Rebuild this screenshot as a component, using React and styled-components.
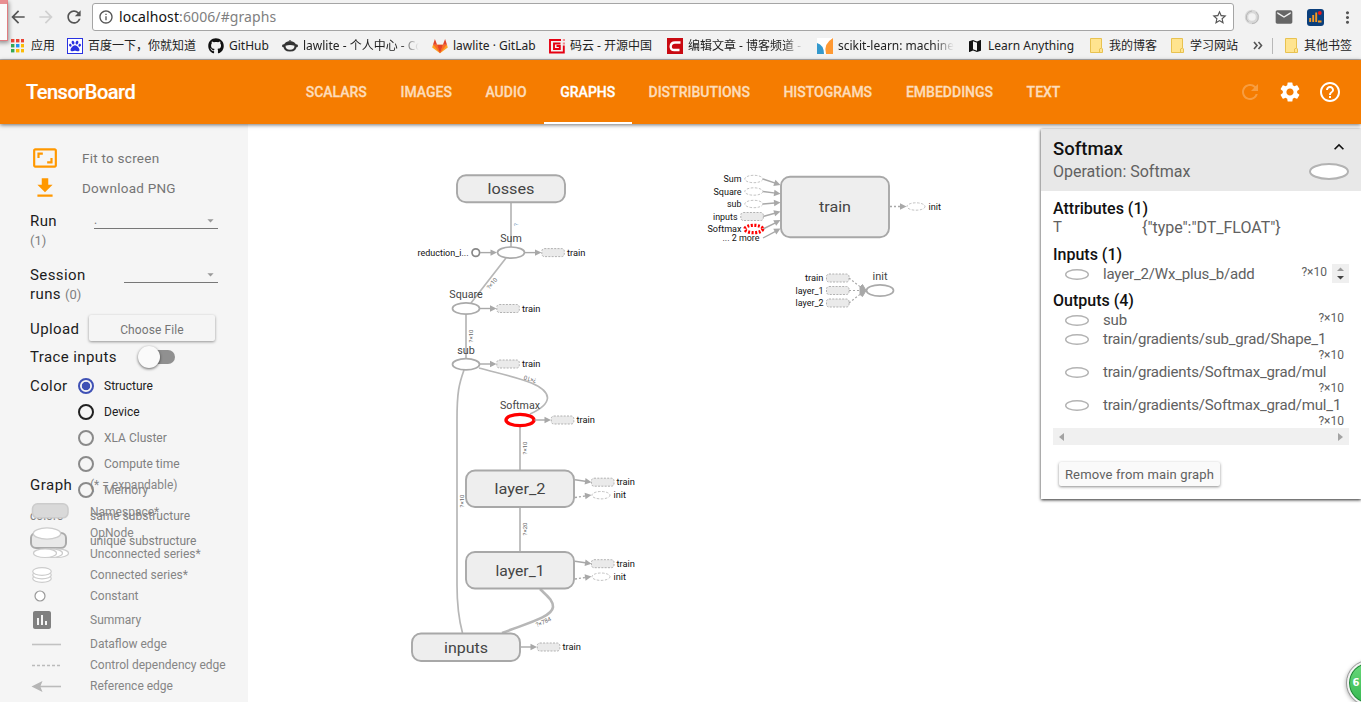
import React from "react";
import styled, { createGlobalStyle } from "styled-components";
import {
  MdRefresh, MdSettings, MdHelpOutline, MdArrowBack, MdArrowForward, MdInfoOutline,
  MdStarBorder, MdMail, MdMoreVert, MdMap, MdAspectRatio, MdGetApp, MdInsertChart,
  MdExpandLess, MdArrowDropDown,
} from "react-icons/md";
import { FaGithub, FaPaw } from "react-icons/fa";

const Global = createGlobalStyle`
  * { box-sizing: border-box; }
  body { margin: 0; overflow: hidden; background: #fff; font-family: Roboto, "Noto Sans CJK SC", sans-serif; }
  svg { display: block; flex: none; }
`;

const Page = styled.div`
  position: relative;
  display: flex;
  flex-direction: column;
  width: 1361px;
  height: 702px;
  overflow: hidden;
`;

/* ---------- browser chrome ---------- */
const Chrome = styled.div`
  height: 60px;
  flex: none;
  background: #f2f2f2;
  border-bottom: 1px solid #b4b2b4;
  color: #555;
`;
const Toolbar = styled.div`
  height: 33px;
  display: flex;
  align-items: center;
  padding: 1px 4px 0 8px;
`;
const NavButtons = styled.div`
  display: flex;
  width: 84px;
  gap: 8px;
`;
const AddressBar = styled.div`
  width: 1142px;
  height: 28px;
  display: flex;
  align-items: center;
  padding: 0 5px;
  background: #fff;
  border: 1px solid #a5a5a5;
  border-radius: 3px;
`;
const Url = styled.div`
  flex: 1;
  padding-left: 5px;
  font: 14px/20px "Noto Sans", sans-serif;
  letter-spacing: 0.1px;
  color: #808080;
  b { font-weight: 400; color: #111; }
`;
const Extensions = styled.div`
  flex: 1;
  display: flex;
  align-items: center;
  justify-content: space-between;
  padding-left: 10px;
`;
const Bookmarks = styled.div`
  height: 25px;
  display: flex;
  align-items: center;
  padding-left: 10px;
`;
const Bookmark = styled.div`
  width: ${(p) => p.$w}px;
  flex: none;
  display: flex;
  align-items: center;
  gap: ${(p) => p.$gap ?? 5}px;
`;
const BookmarkText = styled.span`
  width: ${(p) => (p.$fade ? "117px" : "auto")};
  overflow: hidden;
  white-space: nowrap;
  font: 12px/18px "Noto Sans", "Noto Sans CJK SC", sans-serif;
  color: #222;
  ${(p) => p.$fade && "mask-image: linear-gradient(90deg, #000 82%, transparent 99%);"}
`;
const Divider = styled.div`
  width: 1px;
  height: 16px;
  margin: 0 12px 0 9px;
  background: #b8b8b8;
`;
const WindowCorner = styled.div`
  position: absolute;
  left: -4px;
  top: 0;
  width: 12px;
  height: 41px;
  background: #fbfbfb;
  border: 1px solid #e07c80;
  border-top: 4px solid #e88f92;
  box-shadow: 1px 2px 4px rgba(0, 0, 0, 0.4);
`;

/* ---------- app header ---------- */
const Header = styled.header`
  position: relative;
  z-index: 3;
  height: 64px;
  flex: none;
  display: flex;
  background: #f57c00;
  box-shadow: 0 1px 4px rgba(0, 0, 0, 0.55);
  color: #fff;
`;
const Brand = styled.div`
  width: 288.5px;
  padding-left: 26px;
  font-size: 20px;
  font-weight: 500;
  line-height: 64px;
  letter-spacing: -0.5px;
  -webkit-text-stroke: 0.2px;
`;
const Tabs = styled.nav`
  flex: 1;
  display: flex;
`;
const Tab = styled.div`
  width: ${(p) => p.$w}px;
  text-align: center;
  font-size: 14px;
  font-weight: 500;
  line-height: 65px;
  white-space: nowrap;
  -webkit-text-stroke: 0.3px;
  color: ${(p) => (p.$active ? "#fff" : "#fddcba")};
  box-shadow: ${(p) => (p.$active ? "inset 0 -2px #fff" : "none")};
`;
const HeaderIcons = styled.div`
  display: flex;
  align-items: center;
  gap: 16px;
  padding-right: 19px;
`;

/* ---------- body ---------- */
const Main = styled.main`
  position: relative;
  flex: 1;
  display: flex;
`;
const Sidebar = styled.aside`
  position: relative;
  width: 248px;
  flex: none;
  padding: 19px 30px 0;
  background: #f5f5f5;
`;
const Action = styled.div`
  height: 30px;
  display: flex;
  align-items: center;
  gap: 24px;
  padding-left: 2px;
  font-size: 13.5px;
  line-height: 17px;
  letter-spacing: 0.25px;
  color: #757575;
  svg { color: #ff9800; }
`;
const ActionText = styled.span`
  padding-top: 1px;
`;
const Field = styled.div`
  display: flex;
  justify-content: space-between;
  height: ${(p) => p.$h}px;
  margin-top: ${(p) => p.$mt ?? 0}px;
`;
const FieldName = styled.div`
  font-size: 15px;
  line-height: ${(p) => p.$line ?? 19}px;
  letter-spacing: 0.4px;
  color: #1c1c1c;
  white-space: nowrap;
  small { font-size: 13px; color: #808080; letter-spacing: 0; }
`;
const Select = styled.div`
  width: ${(p) => p.$w}px;
  height: 17px;
  display: flex;
  justify-content: space-between;
  align-items: center;
  border-bottom: 1px solid #777;
  font-size: 12px;
  color: #777;
  svg { color: #999; }
`;
const FileButton = styled.div`
  width: 126px;
  height: 26px;
  margin-right: 3px;
  border-radius: 2px;
  box-shadow: 0 1px 3px rgba(0, 0, 0, 0.4);
  text-align: center;
  font-size: 12px;
  line-height: 31px;
  letter-spacing: 0.1px;
  color: #757575;
`;
const Toggle = styled.div`
  width: 37px;
  height: 22px;
  margin-right: 43px;
  display: flex;
  align-items: center;
  &::before {
    content: "";
    width: 22px;
    height: 22px;
    flex: none;
    border-radius: 50%;
    background: #fafafa;
    box-shadow: 0 1px 3px rgba(0, 0, 0, 0.6);
    z-index: 1;
  }
  &::after {
    content: "";
    width: 26px;
    height: 14px;
    flex: none;
    margin-left: -11px;
    border-radius: 7px;
    background: #909090;
  }
`;
const Radios = styled.div`
  width: 140px;
`;
const Radio = styled.div`
  height: 26px;
  display: flex;
  align-items: center;
  gap: 10px;
  font-size: 12px;
  white-space: nowrap;
  color: ${(p) => (p.$off ? "#808080" : "#212121")};
`;
const Dot = styled.span`
  width: 16px;
  height: 16px;
  border-radius: 50%;
  border: 2px solid ${(p) => (p.$on ? "#3f51b5" : p.$off ? "#8a8a8a" : "#212121")};
  background: ${(p) => (p.$on ? "radial-gradient(circle, #3f51b5 3.8px, transparent 4.6px)" : "none")};
`;
const Swatch = styled.div`
  height: 25px;
  display: flex;
  align-items: center;
  font-size: 12px;
  white-space: nowrap;
  color: #808080;
`;
const SwatchKey = styled.div`
  width: 60px;
`;
const UniqueNode = styled.div`
  width: 37px;
  height: 17px;
  border: 2px solid #aaa;
  border-radius: 6px;
  background: #e9e9e9;
`;
const Legend = styled.div`
  position: absolute;
  left: 30px;
  right: 0;
  bottom: 6px;
`;
const LegendRow = styled.div`
  height: ${(p) => p.$h ?? 21}px;
  margin-bottom: ${(p) => p.$mb ?? 0}px;
  display: flex;
  align-items: center;
  font-size: 12px;
  white-space: nowrap;
  color: #858585;
`;
const LegendKey = styled.div`
  width: 60px;
`;
const LegendTitle = styled(LegendKey)`
  font-size: 15px;
  letter-spacing: 0.5px;
  color: #1c1c1c;
`;

/* ---------- info card ---------- */
const Card = styled.section`
  position: absolute;
  left: 1041px;
  top: 5px;
  width: 320px;
  height: 370px;
  background: #fff;
  box-shadow: 0 1px 3px rgba(0, 0, 0, 0.85);
  color: #616161;
`;
const CardHead = styled.div`
  height: 62px;
  display: flex;
  justify-content: space-between;
  padding: 8px 12px 0;
  background: #e8e8e8;
`;
const CardTitle = styled.div`
  font-size: 18.5px;
  line-height: 24px;
  font-weight: 500;
  color: #111;
`;
const CardSub = styled.div`
  font-size: 16px;
  line-height: 21px;
`;
const CardHeadSide = styled.div`
  display: flex;
  flex-direction: column;
  align-items: flex-end;
  gap: 5.5px;
  svg:first-child { color: #111; }
`;
const CardBody = styled.div`
  padding: 8px 12px 0;
`;
const SectionTitle = styled.div`
  height: 19px;
  font-size: 16px;
  line-height: 19px;
  font-weight: 500;
  color: #111;
`;
const AttrRow = styled.div`
  height: 27px;
  display: flex;
  font-size: 16px;
  line-height: 20px;
  letter-spacing: -0.03px;
  span:first-child { width: 89px; font-size: 15px; line-height: 18px; }
`;
const OpRow = styled.div`
  height: ${(p) => p.$h}px;
  display: flex;
  flex-wrap: wrap;
  align-content: flex-start;
  align-items: flex-start;
  padding-left: 12px;
  font-size: 15px;
  line-height: 20px;
  & > svg { margin-top: 4.5px; }
`;
const OpName = styled.span`
  margin-left: 14px;
  letter-spacing: ${(p) => p.$track ?? -0.17}px;
`;
const Shape = styled.span`
  margin-left: auto;
  margin-right: 5px;
  font-size: 12px;
  line-height: ${(p) => p.$line ?? 15}px;
`;
const ShapeLine = styled.div`
  width: 100%;
  height: 14px;
  display: flex;
  margin-top: -1px;
`;
const Spinner = styled.div`
  width: 17px;
  height: 19px;
  background: #efefef;
`;
const Scrollbar = styled.div`
  height: 17px;
  display: flex;
  align-items: center;
  justify-content: space-between;
  padding: 0 6px;
  background: #f0f0f0;
`;
const RemoveButton = styled.div`
  width: 161px;
  height: 24px;
  margin: 17px 0 0 6px;
  border-radius: 2px;
  background: #fafafa;
  box-shadow: 0 1px 3px rgba(0, 0, 0, 0.45);
  text-align: center;
  font-size: 13px;
  line-height: 25px;
  letter-spacing: 0.15px;
`;
const Badge = styled.div`
  position: absolute;
  left: 1347px;
  top: 661px;
  width: 44px;
  height: 44px;
  border-radius: 50%;
  border: 2px solid #f4f4f4;
  outline: 1px solid #999;
  background: linear-gradient(#6bd97c, #35b850);
  box-shadow: -1px 1px 4px rgba(0, 0, 0, 0.35), inset 0 0 0 1px #23843a;
  color: #fff;
  font: 700 10px/40px "DejaVu Sans", sans-serif;
  padding-left: 3.5px;
`;

/* ---------- small drawings ---------- */
const AppsIcon = () => {
  const colors = ["#ea4335", "#ea4335", "#ea4335", "#34a853", "#2196f3", "#fbbc05", "#34a853", "#fbbc05", "#fbbc05"];
  return (
    <svg width="14" height="14">
      {colors.map((c, i) => (
        <rect key={i} x={1 + (i % 3) * 5} y={Math.floor(i / 3) * 5} width="3.4" height="3.4" fill={c} />
      ))}
    </svg>
  );
};
const BaiduIcon = () => (
  <svg width="16" height="16">
    <rect x=".5" y=".5" width="15" height="15" fill="#fff" stroke="#2932e1" />
    <FaPaw x="2" y="2" size={12} color="#2932e1" />
  </svg>
);
const CodingIcon = () => (
  <svg width="16" height="16">
    <path d="M1.5 7.5Q3 3.2 8 3.2T14.5 7.500Q15 13.500 8 13.500T1.500 7.500" fill="#333" />
    <circle cx="1.500" cy="7.800" r="1.500" fill="#333" />
    <circle cx="14.500" cy="7.800" r="1.500" fill="#333" />
    <path d="M3.500 7.800Q8 6.200 12.500 7.800Q12.500 11.800 8 11.800T3.500 7.800" fill="#f2f2f2" />
    <path d="M6 3.500L8 2l2 1.500z" fill="#333" />
  </svg>
);
const GitlabIcon = () => (
  <svg width="16" height="16" viewBox="0 0 16 16">
    <path d="M8 15.300L.2 9.400 1 6.800h14l.8 2.600z" fill="#fca326" />
    <path d="M8 15.300L1.300 6.800h3.900zM8 15.300l6.700-8.500h-3.900z" fill="#fc6d26" />
    <path d="M8 15.300L5.100 6.800h5.800zM1 6.800L2.900 1l2.200 5.800zM15 6.800L13.100 1l-2.200 5.800z" fill="#e24329" />
  </svg>
);
const GiteeIcon = () => (
  <svg width="16" height="16" fill="none">
    <path d="M12 2H1v12.500h13.800V7.500M11.500 5.500H5v5.500h5.800V8H7.500" stroke="#e60012" strokeWidth="1.900" />
    <path d="M13.800 2h2.200M13.800 5.500h2.200" stroke="#f28a90" strokeWidth="2" />
  </svg>
);
const CsdnIcon = () => (
  <svg width="16" height="16" fill="none">
    <rect width="16" height="16" fill="#c90a12" />
    <path d="M13.500 4.500H8Q4 4.500 3.700 8.300Q3.500 12 7.200 12h5.300" stroke="#fff" strokeWidth="2.400" />
  </svg>
);
const SklearnIcon = () => (
  <svg width="16" height="16">
    <rect width="16" height="16" fill="#fff" />
    <path d="M0 5Q7 7 7 16H0z" fill="#3499cd" />
    <path d="M16 0v16H9Q6 6 16 0" fill="#ff9933" />
  </svg>
);
const FolderIcon = () => (
  <svg width="13" height="15">
    <path d="M.5.500h11v9.500l1 1v3.500H.5z" fill="#ffe48f" stroke="#e8c250" />
    <path d="M9.500 14v-3l2-1" fill="none" stroke="#e8c250" />
  </svg>
);
const SwirlIcon = () => (
  <svg width="16" height="16" fill="none">
    <circle cx="8" cy="8" r="5.500" stroke="#d8d8d8" strokeWidth="3.500" />
    <path d="M4.500 13A6.200 6.200 0 0 1 8 2M8 14.500A6.500 6.500 0 0 0 12 3" stroke="#b8b8b8" strokeWidth="1" />
  </svg>
);
const StatsIcon = () => (
  <svg width="17" height="17">
    <rect width="17" height="17" rx="3" fill="#0b3f7c" />
    <path d="M3.200 13V9M6.200 13V6M9.200 13V3.500M11 12.500h3.500" stroke="#f59a23" strokeWidth="1.900" />
    <circle cx="12.800" cy="4" r="1.900" fill="#f01818" />
  </svg>
);
const OpIcon = ({ w = 24, h = 11, stroke = 1.4 }) => (
  <svg width={w} height={h}>
    <ellipse cx={w / 2} cy={h / 2} rx={w / 2 - stroke / 2} ry={h / 2 - stroke / 2} fill="#fff" stroke="#b3b3b3" strokeWidth={stroke} />
  </svg>
);

/* ---------- graph ---------- */
const GraphSvg = styled.svg`
  width: 1113px;
  height: 578px;
  text { font-family: Roboto, sans-serif; }
`;
const GRAY = "#a8a8a8";

const T = ({ x, y, w, size = 9, fill = "#111", anchor = "start", children }) => (
  <text x={x} y={y + size * 0.36} fontSize={size} fill={fill} textAnchor={anchor} textLength={w} lengthAdjust="spacingAndGlyphs">
    {children}
  </text>
);
const Group = ({ x, y, w = 108, h, label, tw }) => (
  <g>
    <rect x={x} y={y} width={w} height={h} rx="9" fill="#eee" stroke={GRAY} strokeWidth="1.900" />
    <T x={x + w / 2} y={y + h / 2} w={tw} size={15} anchor="middle" fill="#444">{label}</T>
  </g>
);
const Op = ({ x, y, label, tw, selected }) => (
  <g>
    <ellipse cx={x} cy={y} rx={selected ? 14 : 13.5} ry={5.6} fill="#fff" stroke={selected ? "#f00" : "#aaa"} strokeWidth={selected ? 3.4 : 1.700} />
    <T x={x} y={y - 14.500} w={tw} size={10.800} anchor="middle" fill="#444">{label}</T>
  </g>
);
const Arrow = ({ x1, y1, x2, y2, dashed }) => {
  const a = (Math.atan2(y2 - y1, x2 - x1) * 180) / Math.PI;
  return (
    <g>
      <line x1={x1} y1={y1} x2={x2 - 3} y2={y2 - (y2 - y1) * 0.2} stroke={GRAY} strokeWidth="1.400" strokeDasharray={dashed ? "2 2" : undefined} />
      <path d="M0 0L-6.500-3.200V3.200z" transform={`translate(${x2} ${y2}) rotate(${a})`} fill={GRAY} />
    </g>
  );
};
const RefBox = ({ x, y }) => (
  <rect x={x} y={y - 4} width="22.500" height="8" rx="2.500" fill="#eaeaea" stroke="#aaa" strokeWidth=".9" strokeDasharray="2 1.300" />
);
const RefOp = ({ x, y, selected }) => (
  <ellipse cx={x} cy={y} rx="9" ry="3.700" fill="#fff" stroke={selected ? "#f00" : "#bbb"} strokeWidth={selected ? 3.2 : 0.9} strokeDasharray={selected ? "2 1.500" : "2.500 1.500"} />
);
const TrainOut = ({ x, y }) => (
  <g>
    <Arrow x1={x} y1={y} x2={x + 16.500} y2={y} />
    <RefBox x={x + 16.800} y={y} />
    <T x={x + 42} y={y} w={18.500}>train</T>
  </g>
);
const LayerOut = ({ y }) => (
  <g>
    <Arrow x1={575} y1={y - 9} x2={591.500} y2={y - 6.500} />
    <Arrow x1={575} y1={y + 8.800} x2={591.500} y2={y + 6.300} dashed />
    <RefBox x={591.500} y={y - 6.500} />
    <T x={616.500} y={y - 6.500} w={18.500}>train</T>
    <RefOp x={601} y={y + 6.500} />
    <T x={613.500} y={y + 6.500} w={12.500}>init</T>
  </g>
);
const EdgeLabel = ({ x, y, r, fill = "#666", children }) => (
  <text transform={`translate(${x} ${y}) rotate(${r})`} y="2" textAnchor="middle" fontSize="6" fill={fill}>{children}</text>
);

const trainInputs = [
  { t: "Sum", y: 179, w: 18, ty: 185 },
  { t: "Square", y: 191.5, w: 28, ty: 193.8 },
  { t: "sub", y: 204, w: 14.5, ty: 202.5 },
  { t: "inputs", y: 216.5, w: 24.5, ty: 211.5, box: true },
  { t: "Softmax", y: 229, w: 34, ty: 220, sel: true },
];

const Graph = () => (
  <GraphSvg viewBox="248 124 1113 578">
    <g fill="none" stroke="#b7b7b7" strokeWidth="1.700">
      <path d="M511 203V247M506 258L471 303M466 314V358M520 427V470M520 507V552" />
      <path d="M464 370C459 384 457 392 457 420V585C457 605 459 620 462.500 633" />
      <path d="M479 368C512 377 547 383 547.500 398C547 405 539 410 530 414" />
      <path d="M540 589C547 596 553 600 553 607C552 617 528 623 502 633" strokeWidth="2.600" />
    </g>
    <Group x={457} y={175.200} h={27} label="losses" tw={47} />
    <Group x={466} y={470.500} h={36.500} label="layer_2" tw={51} />
    <Group x={466} y={552} h={36.500} label="layer_1" tw={49} />
    <Group x={412} y={633.500} h={27.500} label="inputs" tw={44} />
    <Group x={781} y={176.800} h={60.500} label="train" tw={32} />
    <Op x={511} y={252.600} label="Sum" tw={21.500} />
    <Op x={466} y={308.500} label="Square" tw={33.500} />
    <Op x={466} y={364.300} label="sub" tw={17.500} />
    <Op x={520} y={420} label="Softmax" tw={40} selected />
    <Op x={880} y={290.500} label="init" tw={15} />

    <EdgeLabel x={515.500} y={224.500} r={-90} fill="#6a93b8">?</EdgeLabel>
    <EdgeLabel x={492} y={283.500} r={-50}>?×10</EdgeLabel>
    <EdgeLabel x={471} y={336} r={-90}>?×10</EdgeLabel>
    <EdgeLabel x={530} y={379} r={197}>?×10</EdgeLabel>
    <EdgeLabel x={525} y={448} r={-90}>?×10</EdgeLabel>
    <EdgeLabel x={461.500} y={501} r={-90}>?×10</EdgeLabel>
    <EdgeLabel x={525} y={529} r={-90}>?×20</EdgeLabel>
    <EdgeLabel x={543.500} y={622} r={-24}>?×784</EdgeLabel>

    <T x={417.500} y={252.600} w={51}>reduction_i...</T>
    <circle cx="475.800" cy="252.600" r="3.800" fill="#fff" stroke="#888" strokeWidth="1.700" />
    <Arrow x1={480} y1={252.600} x2={497} y2={252.600} />
    <TrainOut x={525} y={252.600} />
    <TrainOut x={480} y={308.500} />
    <TrainOut x={480} y={364} />
    <TrainOut x={534.500} y={420} />
    <TrainOut x={520.500} y={647} />
    <LayerOut y={488.700} />
    <LayerOut y={570.200} />

    {trainInputs.map((n) => (
      <g key={n.t}>
        <Arrow x1={763} y1={n.y} x2={780.500} y2={n.ty} />
        {n.box ? <RefBox x={740.800} y={n.y} /> : <RefOp x={753.800} y={n.y} selected={n.sel} />}
        <T x={n.box ? 737.500 : 741.500} y={n.y} w={n.w} anchor="end">{n.t}</T>
      </g>
    ))}
    <Arrow x1={763} y1={238} x2={780.500} y2={228.500} />
    <T x={759.500} y={238} w={37} anchor="end">... 2 more</T>
    <Arrow x1={890} y1={206.500} x2={906.500} y2={206.500} dashed />
    <RefOp x={916} y={206.500} />
    <T x={928.500} y={206.500} w={12.500}>init</T>

    {[["train", 278, 18.5], ["layer_1", 290.5, 28], ["layer_2", 303, 28]].map(([t, y, w]) => (
      <g key={t}>
        <T x={823.500} y={y} w={w} anchor="end">{t}</T>
        <RefBox x={826.500} y={y} />
        <path d={`M849 ${y}L861 ${290.5 + (y - 290.5) * 0.25}`} fill="none" stroke={GRAY} strokeWidth="1.200" strokeDasharray="2 2" />
      </g>
    ))}
    <path d="M866 290.500L862.500 284.500L860 287V294.500L862.500 296.500z" fill={GRAY} stroke={GRAY} />
  </GraphSvg>
);

const tabs = [["SCALARS", 95.5], ["IMAGES", 84.5], ["AUDIO", 75], ["GRAPHS", 88.5], ["DISTRIBUTIONS", 134.5], ["HISTOGRAMS", 122.5], ["EMBEDDINGS", 121], ["TEXT", 67]];

const legend = [
  ["Namespace*", <svg width="40" height="18"><rect x="2.500" y=".8" width="35.500" height="14" rx="5" fill="#d9d9d9" stroke="#ccc" strokeWidth="1.600" /></svg>],
  ["OpNode", <svg width="40" height="14"><ellipse cx="17" cy="7.500" rx="13.700" ry="5.600" fill="#fff" stroke="#ccc" strokeWidth="1.400" /></svg>],
  ["Unconnected series*", (
    <svg width="40" height="12">
      {[27, 21, 15].map((x) => <ellipse key={x} cx={x} cy="5.200" rx="11.500" ry="4.300" fill="#fff" stroke="#ccc" strokeWidth="1.200" />)}
    </svg>
  )],
  ["Connected series*", (
    <svg width="40" height="16">
      {[11.5, 8, 4.5].map((y) => <ellipse key={y} cx="12" cy={y} rx="9.300" ry="3.800" fill="#fff" stroke="#ccc" strokeWidth="1.200" />)}
    </svg>
  )],
  ["Constant", <svg width="40" height="12"><circle cx="10" cy="6" r="5" fill="#fff" stroke="#999" strokeWidth="1.200" /></svg>],
  ["Summary", <MdInsertChart size={24} color="#808080" />, 27],
  ["Dataflow edge", <svg width="40" height="4"><path d="M2 2.500h29" stroke="#c2c2c2" strokeWidth="1.600" /></svg>],
  ["Control dependency edge", <svg width="40" height="4"><path d="M2 2.500h28" stroke="#bbb" strokeWidth="1.400" strokeDasharray="3 2" /></svg>],
  ["Reference edge", <svg width="40" height="12"><path d="M9 6.500h22" stroke="#bbb" strokeWidth="1.600" /><path d="M1.500 6.500L12.500 1l-2.200 5.500L12.500 12z" fill="#b5b5b5" /></svg>],
];

export default function App() {
  return (
    <Page>
      <Global />
      <Chrome>
        <Toolbar>
          <NavButtons>
            <MdArrowBack size={20} />
            <MdArrowForward size={20} color="#d0d0d0" />
            <MdRefresh size={20} />
          </NavButtons>
          <AddressBar>
            <MdInfoOutline size={16} />
            <Url><b>localhost</b>:6006/#graphs</Url>
            <MdStarBorder size={17} />
          </AddressBar>
          <Extensions>
            <SwirlIcon />
            <MdMail size={20} color="#666" />
            <StatsIcon />
            <MdMoreVert size={19} />
          </Extensions>
        </Toolbar>
        <Bookmarks>
          <Bookmark $w={57} $gap={7}><AppsIcon /><BookmarkText>应用</BookmarkText></Bookmark>
          <Bookmark $w={141}><BaiduIcon /><BookmarkText>百度一下，你就知道</BookmarkText></Bookmark>
          <Bookmark $w={74}><FaGithub size={16} color="#111" /><BookmarkText>GitHub</BookmarkText></Bookmark>
          <Bookmark $w={150}><CodingIcon /><BookmarkText $fade>lawlite - 个人中心 - Coding</BookmarkText></Bookmark>
          <Bookmark $w={117}><GitlabIcon /><BookmarkText>lawlite · GitLab</BookmarkText></Bookmark>
          <Bookmark $w={118}><GiteeIcon /><BookmarkText>码云 - 开源中国</BookmarkText></Bookmark>
          <Bookmark $w={150}><CsdnIcon /><BookmarkText $fade>编辑文章 - 博客频道 - CSDN</BookmarkText></Bookmark>
          <Bookmark $w={150}><SklearnIcon /><BookmarkText $fade>scikit-learn: machine learning</BookmarkText></Bookmark>
          <Bookmark $w={123}><MdMap size={16} color="#111" /><BookmarkText>Learn Anything</BookmarkText></Bookmark>
          <Bookmark $w={81} $gap={6}><FolderIcon /><BookmarkText>我的博客</BookmarkText></Bookmark>
          <Bookmark $w={82} $gap={6}><FolderIcon /><BookmarkText>学习网站</BookmarkText></Bookmark>
          <svg width="10" height="9" fill="none"><path d="M1 1l3 3.500L1 8M5.500 1l3 3.500-3 3.500" stroke="#555" strokeWidth="1.600" /></svg>
          <Divider />
          <Bookmark $w={70} $gap={6}><FolderIcon /><BookmarkText>其他书签</BookmarkText></Bookmark>
        </Bookmarks>
      </Chrome>
      <WindowCorner />

      <Header>
        <Brand>TensorBoard</Brand>
        <Tabs>
          {tabs.map(([t, w]) => <Tab key={t} $w={w} $active={t === "GRAPHS"}>{t}</Tab>)}
        </Tabs>
        <HeaderIcons>
          <MdRefresh size={24} opacity={0.25} />
          <MdSettings size={24} />
          <MdHelpOutline size={24} />
        </HeaderIcons>
      </Header>

      <Main>
        <Sidebar>
          <Action><MdAspectRatio size={26} /><ActionText>Fit to screen</ActionText></Action>
          <Action><MdGetApp size={26} /><ActionText>Download PNG</ActionText></Action>
          <Field $h={40} $mt={9}>
            <FieldName>Run<br /><small>(1)</small></FieldName>
            <Select $w={124}><span>.</span><MdArrowDropDown size={15} /></Select>
          </Field>
          <Field $h={40} $mt={14}>
            <FieldName>Session<br />runs <small>(0)</small></FieldName>
            <Select $w={94}><span /><MdArrowDropDown size={15} /></Select>
          </Field>
          <Field $h={28} $mt={9}>
            <FieldName $line={28}>Upload</FieldName>
            <FileButton>Choose File</FileButton>
          </Field>
          <Field $h={27} $mt={3}>
            <FieldName $line={23}>Trace inputs</FieldName>
            <Toggle />
          </Field>
          <Field $h={130}>
            <FieldName $line={27}>Color</FieldName>
            <Radios>
              <Radio><Dot $on />Structure</Radio>
              <Radio><Dot />Device</Radio>
              <Radio $off><Dot $off />XLA Cluster</Radio>
              <Radio $off><Dot $off />Compute time</Radio>
              <Radio $off><Dot $off />Memory</Radio>
            </Radios>
          </Field>
          <Swatch><SwatchKey>colors</SwatchKey>same substructure</Swatch>
          <Swatch><SwatchKey><UniqueNode /></SwatchKey>unique substructure</Swatch>
          <Legend>
            <LegendRow $mb={6}>
              <LegendTitle>Graph</LegendTitle>(* = expandable)
            </LegendRow>
            {legend.map(([t, icon, h]) => (
              <LegendRow key={t} $h={h}><LegendKey>{icon}</LegendKey>{t}</LegendRow>
            ))}
          </Legend>
        </Sidebar>
        <Graph />
        <Card>
          <CardHead>
            <div>
              <CardTitle>Softmax</CardTitle>
              <CardSub>Operation: Softmax</CardSub>
            </div>
            <CardHeadSide>
              <MdExpandLess size={20} />
              <OpIcon w={40} h={17} stroke={2} />
            </CardHeadSide>
          </CardHead>
          <CardBody>
            <SectionTitle>Attributes (1)</SectionTitle>
            <AttrRow><span>T</span><span>{'{"type":"DT_FLOAT"}'}</span></AttrRow>
            <SectionTitle>Inputs (1)</SectionTitle>
            <OpRow $h={27}>
              <OpIcon /><OpName>layer_2/Wx_plus_b/add</OpName>
              <Shape $line={16}>?×10</Shape>
              <Spinner>
                <svg width="17" height="19"><path d="M5 7l3.500-3.500L12 7z" fill="#999" /><path d="M5 12l3.500 3.500L12 12z" fill="#444" /></svg>
              </Spinner>
            </OpRow>
            <SectionTitle>Outputs (4)</SectionTitle>
            <OpRow $h={19}><OpIcon /><OpName>sub</OpName><Shape $line={17}>?×10</Shape></OpRow>
            {["sub_grad/Shape_1", "Softmax_grad/mul", "Softmax_grad/mul_1"].map((n) => (
              <OpRow key={n} $h={33}>
                <OpIcon /><OpName>train/gradients/{n}</OpName>
                <ShapeLine><Shape>?×10</Shape></ShapeLine>
              </OpRow>
            ))}
            <Scrollbar>
              <svg width="5" height="8"><path d="M5 0v8L0 4z" fill="#a3a3a3" /></svg>
              <svg width="5" height="8"><path d="M0 0v8l5-4z" fill="#a3a3a3" /></svg>
            </Scrollbar>
            <RemoveButton>Remove from main graph</RemoveButton>
          </CardBody>
        </Card>
      </Main>
      <Badge>6</Badge>
    </Page>
  );
}
